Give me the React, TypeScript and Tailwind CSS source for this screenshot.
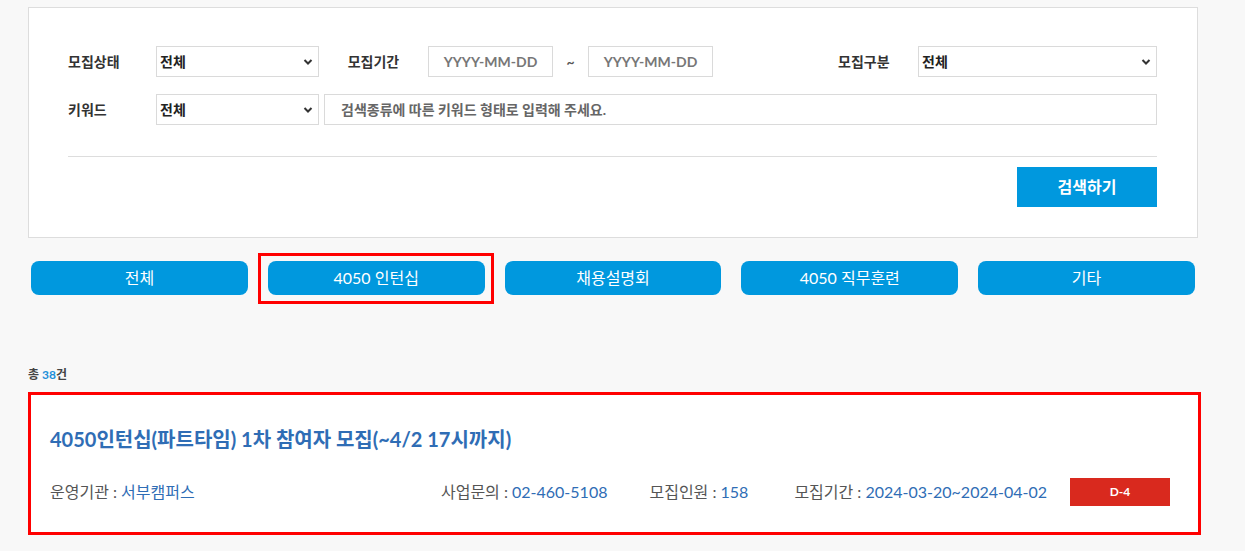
import React from 'react';

const font = { fontFamily: '"Lato", "Noto Sans CJK KR", sans-serif' };

function Chevron() {
  return (
    <svg width="10" height="7" viewBox="0 0 10 7" className="absolute right-[6px] top-1/2 -translate-y-1/2 pointer-events-none">
      <path d="M1.5 1.5 L5 5 L8.5 1.5" fill="none" stroke="#333" strokeWidth="2" />
    </svg>
  );
}

function Select({ className }: { className: string }) {
  return (
    <div className={`relative h-[31px] ${className}`}>
      <select className="w-full h-full appearance-none border border-[#dadada] bg-white pl-[3px] text-[14px] font-bold text-[#222] outline-none">
        <option>전체</option>
      </select>
      <Chevron />
    </div>
  );
}

const categories = ['전체', '4050 인턴십', '채용설명회', '4050 직무훈련', '기타'];

export default function App() {
  return (
    <div className="min-h-screen bg-[#f8f8f8] pt-[7px]" style={font}>
      {/* 검색 패널 */}
      <div className="ml-[28px] w-[1170px] border border-[#dddddd] bg-white pl-[39px] pr-[40px] pt-[38px] pb-[30px]">
        <div className="flex items-center h-[31px]">
          <label className="w-[88px] text-[14px] font-bold text-[#333]">모집상태</label>
          <Select className="w-[163px]" />
          <label className="w-[109px] text-center text-[14px] font-bold text-[#333]">모집기간</label>
          <input placeholder="YYYY-MM-DD" className="w-[125px] h-[31px] border border-[#dadada] text-center text-[14px] font-bold text-[#222] placeholder:text-[#777] outline-none" />
          <span className="w-[35px] text-center text-[14px] font-bold text-[#555]">~</span>
          <input placeholder="YYYY-MM-DD" className="w-[125px] h-[31px] border border-[#dadada] text-center text-[14px] font-bold text-[#222] placeholder:text-[#777] outline-none" />
          <div className="w-[125px]" />
          <label className="w-[80px] text-[14px] font-bold text-[#333]">모집구분</label>
          <Select className="flex-1" />
        </div>
        <div className="flex items-center mt-[17px] h-[31px]">
          <label className="w-[88px] text-[14px] font-bold text-[#333]">키워드</label>
          <Select className="w-[163px]" />
          <input
            placeholder="검색종류에 따른 키워드 형태로 입력해 주세요."
            className="ml-[5px] flex-1 h-[31px] border border-[#dadada] px-[16px] text-[14px] font-bold text-[#222] placeholder:text-[#666] outline-none"
          />
        </div>
        <div className="mt-[31px] border-t border-[#dddddd]" />
        <div className="flex justify-end mt-[10px]">
          <button className="w-[140px] h-[40px] bg-[#0098de] text-white text-[16px] font-bold">검색하기</button>
        </div>
      </div>

      {/* 카테고리 탭 */}
      <div className="ml-[31px] w-[1164px] mt-[23px] grid grid-cols-5 gap-[20px]">
        {categories.map((c, i) => (
          <div key={c} className="relative">
            <button className="w-full h-[34px] rounded-[8px] bg-[#0098de] text-white text-[16px]">{c}</button>
            {i === 1 && (
              <div className="absolute -left-[10px] -right-[9px] -top-[8px] -bottom-[9px] border-[3px] border-[#ff0000] pointer-events-none" />
            )}
          </div>
        ))}
      </div>

      {/* 결과 */}
      <div className="ml-[28px] mt-[71px] text-[12px] font-bold leading-[18px] text-[#444]">
        총 <span className="text-[#1d8fd8]">38</span>건
      </div>

      <div className="relative ml-[28px] mt-[8px] w-[1173px] bg-white px-[22px] pt-[33px] pb-[29px]">
        <h3 className="text-[20px] font-bold leading-[28px] text-[#2f6db5]">
          4050인턴십(파트타임) 1차 참여자 모집(~4/2 17시까지)
        </h3>
        <div className="mt-[25px] flex items-center justify-between text-[16px] text-[#555]">
          <div>
            운영기관 : <span className="text-[#2f6db5]">서부캠퍼스</span>
          </div>
          <div className="flex items-center mr-[9px]">
            <span>
              사업문의 : <span className="text-[#2f6db5]">02-460-5108</span>
            </span>
            <span className="ml-[42px]">
              모집인원 : <span className="text-[#2f6db5]">158</span>
            </span>
            <span className="ml-[46px]">
              모집기간 : <span className="text-[#2f6db5]">2024-03-20~2024-04-02</span>
            </span>
            <span className="ml-[23px] flex h-[28px] w-[100px] items-center justify-center bg-[#d9291e] text-[12px] font-bold text-white">
              D-4
            </span>
          </div>
        </div>
        <div className="absolute inset-0 border-[3px] border-[#ff0000] pointer-events-none" />
      </div>
    </div>
  );
}
